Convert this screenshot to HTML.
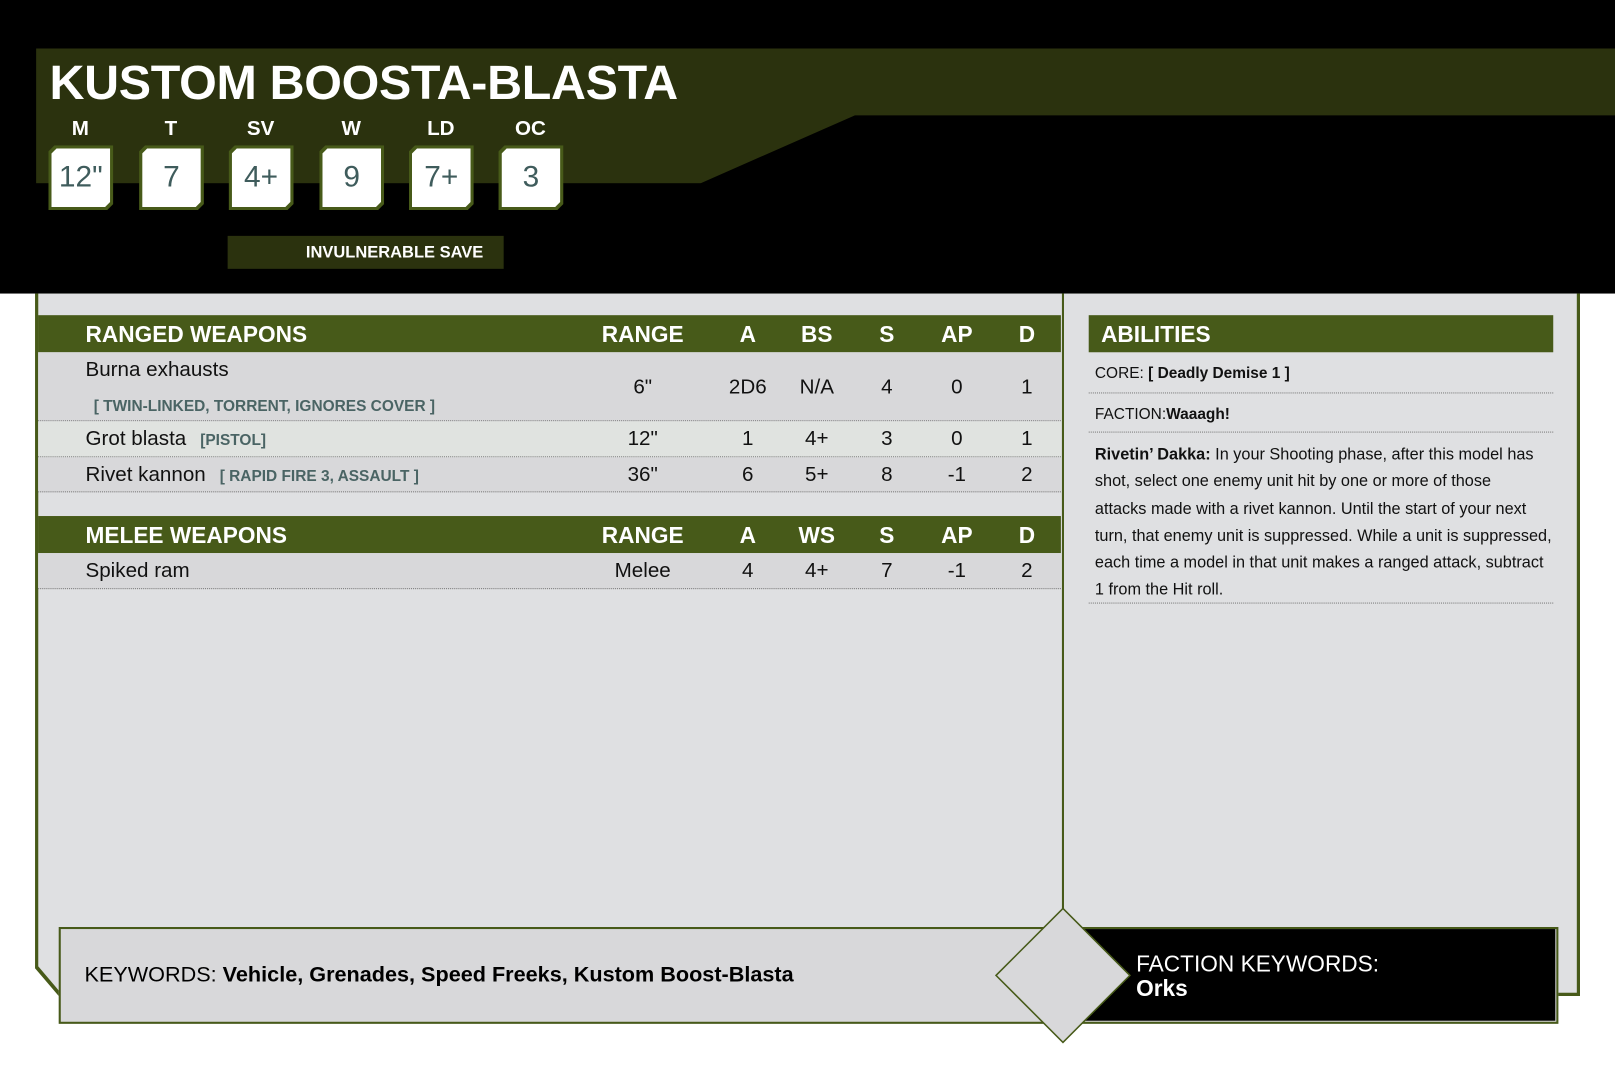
<!DOCTYPE html>
<html><head><meta charset="utf-8"><style>
*{margin:0;padding:0;box-sizing:border-box}
body{width:1615px;height:1071px;background:#fff;position:relative;overflow:hidden;font-family:"Liberation Sans",sans-serif}
#w{position:absolute;left:0;top:0;width:1568px;height:1040px;transform:scale(1.03);transform-origin:0 0}
.a{position:absolute}
.stl{position:absolute;top:114px;width:62px;text-align:center;color:#fff;font-weight:bold;font-size:20px}
.sb{position:absolute;top:141px;width:63px;height:63px;background:#475a19;clip-path:polygon(6px 0,100% 0,100% calc(100% - 6px),calc(100% - 6px) 100%,0 100%,0 6px)}
.sb div{position:absolute;left:3px;top:3px;right:3px;bottom:3px;background:#fff;clip-path:polygon(5px 0,100% 0,100% calc(100% - 5px),calc(100% - 5px) 100%,0 100%,0 5px);color:#3f5c5c;font-size:29px;text-align:center;line-height:57px}
.hd{position:absolute;left:37px;width:993px;height:36px;background:#475a19;color:#fff;font-weight:bold;font-size:22px;line-height:38px}
.c{position:absolute;width:80px;text-align:center;margin-left:-40px}
.row{position:absolute;left:37px;width:993px;border-bottom:1px dotted #777;font-size:20px;color:#111}
.kw{color:#4a6464;font-size:15px;font-weight:bold;letter-spacing:0}
.ab{position:absolute;left:1057px;width:451px;border-bottom:1px dotted #777;font-size:15px;color:#111}
</style></head><body><div id="w">
<div class="a" style="left:0;top:0;width:1615px;height:285px;background:#000"></div>
<div class="a" style="left:35px;top:47px;width:1580px;height:131px;background:#2b320e;clip-path:polygon(0 0,100% 0,100% 65px,795px 65px,645px 131px,0 131px)"></div>
<div class="a" style="left:48px;top:52px;color:#fff;font-weight:bold;font-size:47px;letter-spacing:-0.3px">KUSTOM BOOSTA-BLASTA</div>
<div class="stl" style="left:47px">M</div><div class="stl" style="left:135px">T</div><div class="stl" style="left:222px">SV</div><div class="stl" style="left:310px">W</div><div class="stl" style="left:397px">LD</div><div class="stl" style="left:484px">OC</div>
<div class="sb" style="left:47px"><div>12"</div></div><div class="sb" style="left:135px"><div>7</div></div><div class="sb" style="left:222px"><div>4+</div></div><div class="sb" style="left:310px"><div>9</div></div><div class="sb" style="left:397px"><div>7+</div></div><div class="sb" style="left:484px"><div>3</div></div>
<div class="a" style="left:221px;top:229px;width:268px;height:32px;background:#2b320e;color:#fff;font-weight:bold;font-size:16px;line-height:33px;padding-left:76px">INVULNERABLE SAVE</div>
<div class="a" style="left:34px;top:285px;width:1500px;height:682px;background:#475a19;clip-path:polygon(0 0,100% 0,100% 100%,23px 100%,0 655px)"></div>
<div class="a" style="left:37px;top:285px;width:1494px;height:679px;background:#dfe0e2;clip-path:polygon(0 0,100% 0,100% 100%,22px 100%,0 653px)"></div>
<div class="a" style="left:1031px;top:285px;width:2px;height:600px;background:#475a19"></div>
<div class="hd" style="top:306px"><span style="position:absolute;left:46px">RANGED WEAPONS</span><span class="c" style="left:587px">RANGE</span><span class="c" style="left:689px">A</span><span class="c" style="left:756px">BS</span><span class="c" style="left:824px">S</span><span class="c" style="left:892px">AP</span><span class="c" style="left:960px">D</span></div>
<div class="row" style="top:342px;height:67px;background:#d8d8da"><span class="a" style="left:46px;top:6px">Burna exhausts</span><span class="a kw" style="left:54px;top:44px">[ TWIN-LINKED, TORRENT, IGNORES COVER ]</span>
<span class="c" style="left:587px;top:23px">6"</span><span class="c" style="left:689px;top:23px">2D6</span><span class="c" style="left:756px;top:23px">N/A</span><span class="c" style="left:824px;top:23px">4</span><span class="c" style="left:892px;top:23px">0</span><span class="c" style="left:960px;top:23px">1</span></div>
<div class="row" style="top:409px;height:35px;background:#e0e3e0"><span class="a" style="left:46px;top:6px">Grot blasta <span class="kw" style="margin-left:8px">[PISTOL]</span></span>
<span class="c" style="left:587px;top:6px">12"</span><span class="c" style="left:689px;top:6px">1</span><span class="c" style="left:756px;top:6px">4+</span><span class="c" style="left:824px;top:6px">3</span><span class="c" style="left:892px;top:6px">0</span><span class="c" style="left:960px;top:6px">1</span></div>
<div class="row" style="top:444px;height:34px;background:#d8d8da"><span class="a" style="left:46px;top:6px">Rivet kannon <span class="kw" style="margin-left:8px">[ RAPID FIRE 3, ASSAULT ]</span></span>
<span class="c" style="left:587px;top:6px">36"</span><span class="c" style="left:689px;top:6px">6</span><span class="c" style="left:756px;top:6px">5+</span><span class="c" style="left:824px;top:6px">8</span><span class="c" style="left:892px;top:6px">-1</span><span class="c" style="left:960px;top:6px">2</span></div>
<div class="hd" style="top:501px"><span style="position:absolute;left:46px">MELEE WEAPONS</span><span class="c" style="left:587px">RANGE</span><span class="c" style="left:689px">A</span><span class="c" style="left:756px">WS</span><span class="c" style="left:824px">S</span><span class="c" style="left:892px">AP</span><span class="c" style="left:960px">D</span></div>
<div class="row" style="top:537px;height:35px;background:#d8d8da"><span class="a" style="left:46px;top:6px">Spiked ram</span>
<span class="c" style="left:587px;top:6px">Melee</span><span class="c" style="left:689px;top:6px">4</span><span class="c" style="left:756px;top:6px">4+</span><span class="c" style="left:824px;top:6px">7</span><span class="c" style="left:892px;top:6px">-1</span><span class="c" style="left:960px;top:6px">2</span></div>
<div class="a" style="left:1057px;top:306px;width:451px;height:36px;background:#475a19;color:#fff;font-weight:bold;font-size:22px;line-height:38px;padding-left:12px">ABILITIES</div>
<div class="ab" style="top:342px;height:40px;padding:12px 0 0 6px">CORE: <b>[ Deadly Demise 1 ]</b></div>
<div class="ab" style="top:382px;height:38px;padding:12px 0 0 6px">FACTION:<b>Waaagh!</b></div>
<div class="ab" style="top:420px;height:166px;padding:9px 0 0 6px;line-height:26.3px;font-size:15.8px;white-space:nowrap"><b>Rivetin’ Dakka:</b> In your Shooting phase, after this model has<br>shot, select one enemy unit hit by one or more of those<br>attacks made with a rivet kannon. Until the start of your next<br>turn, that enemy unit is suppressed. While a unit is suppressed,<br>each time a model in that unit makes a ranged attack, subtract<br>1 from the Hit roll.</div>
<div class="a" style="left:57px;top:900px;width:1456px;height:94px;border:2px solid #475a19;background:#d8d8da"></div>
<div class="a" style="left:1045px;top:902px;width:465px;height:89px;background:#000;color:#fff;font-size:22px;line-height:24px;padding:22px 0 0 58px">FACTION KEYWORDS:<br><b>Orks</b></div>
<svg class="a" style="left:965px;top:880px" width="135" height="134"><polygon points="67,2 132,67 67,132 2,67" fill="#d8d8da" stroke="#475a19" stroke-width="1.5"/></svg>
<div class="a" style="left:82px;top:935px;font-size:21px;color:#000">KEYWORDS: <b>Vehicle, Grenades, Speed Freeks, Kustom Boost-Blasta</b></div>
</div></body></html>
